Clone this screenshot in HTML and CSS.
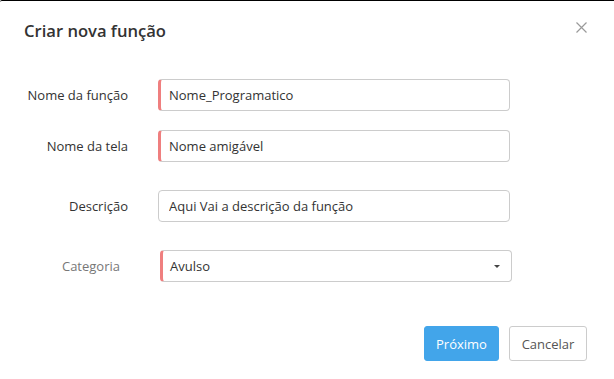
FILE: index.html
```html
<!DOCTYPE html>
<html lang="pt">
<head>
    <meta charset="UTF-8">
    <meta name="viewport" content="width=device-width, initial-scale=1.0">
    <title>Criar nova função</title>
    <link rel="stylesheet" href="styles.css">
</head>
<body>
    <div class="modal">
        <div class="modal-header">
            <h2>Criar nova função</h2>
            <span class="close">
                <svg width="11" height="11" viewBox="0 0 11 11">
                    <path d="M0.5 0.5 L10.5 10.5 M10.5 0.5 L0.5 10.5" stroke="#9a9a9a" stroke-width="1.2" fill="none"/>
                </svg>
            </span>
        </div>
        <form class="modal-form">
            <div class="form-row">
                <label for="nome">Nome da função</label>
                <input type="text" id="nome" class="required" value="Nome_Programatico">
            </div>
            <div class="form-row row-tela">
                <label for="tela">Nome da tela</label>
                <input type="text" id="tela" class="required" value="Nome amigável">
            </div>
            <div class="form-row row-wide">
                <label for="descricao">Descrição</label>
                <input type="text" id="descricao" value="Aqui Vai a descrição da função">
            </div>
            <div class="form-row row-wide row-categoria">
                <label for="categoria">Categoria</label>
                <div class="select-box required">
                    <span>Avulso</span>
                    <span class="caret"></span>
                </div>
            </div>
        </form>
        <div class="modal-footer">
            <button type="button" class="btn btn-primary">Próximo</button>
            <button type="button" class="btn btn-default">Cancelar</button>
        </div>
    </div>
</body>
</html>
```

FILE: styles.css
```css
* {
    box-sizing: border-box;
}
body {
    margin: 0;
    font-family: "Open Sans", Lato, sans-serif;
    color: #333;
    background-color: #fff;
}
.modal {
    height: 379px;
    border-top: 1px solid #000;
    border-top-left-radius: 2px;
}
.modal-header {
    display: flex;
    justify-content: space-between;
    align-items: center;
    height: 58px;
    padding: 0 27px 0 24px;
}
.modal-header h2 {
    margin: 0;
    font-size: 16.6px;
    font-weight: 600;
    color: #333;
}
.close {
    display: flex;
    margin-top: -6px;
}
.modal-form {
    padding-top: 20px;
}
.form-row {
    display: grid;
    grid-template-columns: 128px 352px;
    column-gap: 30px;
    align-items: center;
}
.row-tela {
    margin-top: 19px;
}
.row-wide {
    margin-top: 28px;
}
.form-row label {
    text-align: right;
    font-size: 13px;
    color: #333;
}
.form-row input, .select-box {
    height: 32px;
    width: 100%;
    padding: 0 10px;
    border: 1px solid #ccc;
    border-radius: 4px;
    font-family: inherit;
    font-size: 13px;
    color: #333;
    background-color: #fff;
}
.required {
    border-left: 3px solid #ef7f7f !important;
    padding-left: 8px !important;
}
.row-categoria {
    grid-template-columns: 120px 352px;
    column-gap: 40px;
}
.row-categoria label {
    color: #777;
}
.select-box {
    display: flex;
    align-items: center;
    justify-content: space-between;
    padding-right: 11px;
}
.select-box.required {
    padding-left: 7px !important;
}
.caret {
    width: 0;
    height: 0;
    border-left: 3.5px solid transparent;
    border-right: 3.5px solid transparent;
    border-top: 3.5px solid #444;
}
.modal-footer {
    display: flex;
    justify-content: flex-end;
    gap: 10px;
    padding: 44px 27px 0 0;
}
.btn {
    height: 35px;
    padding: 0 10px;
    border-radius: 3px;
    font-family: inherit;
    font-size: 13px;
    cursor: pointer;
}
.btn-primary {
    width: 75px;
    background-color: #42a5ea;
    border: 1px solid #42a5ea;
    color: #fff;
}
.btn-default {
    width: 78px;
    background-color: #fff;
    border: 1px solid #ccc;
    color: #555;
}
```
